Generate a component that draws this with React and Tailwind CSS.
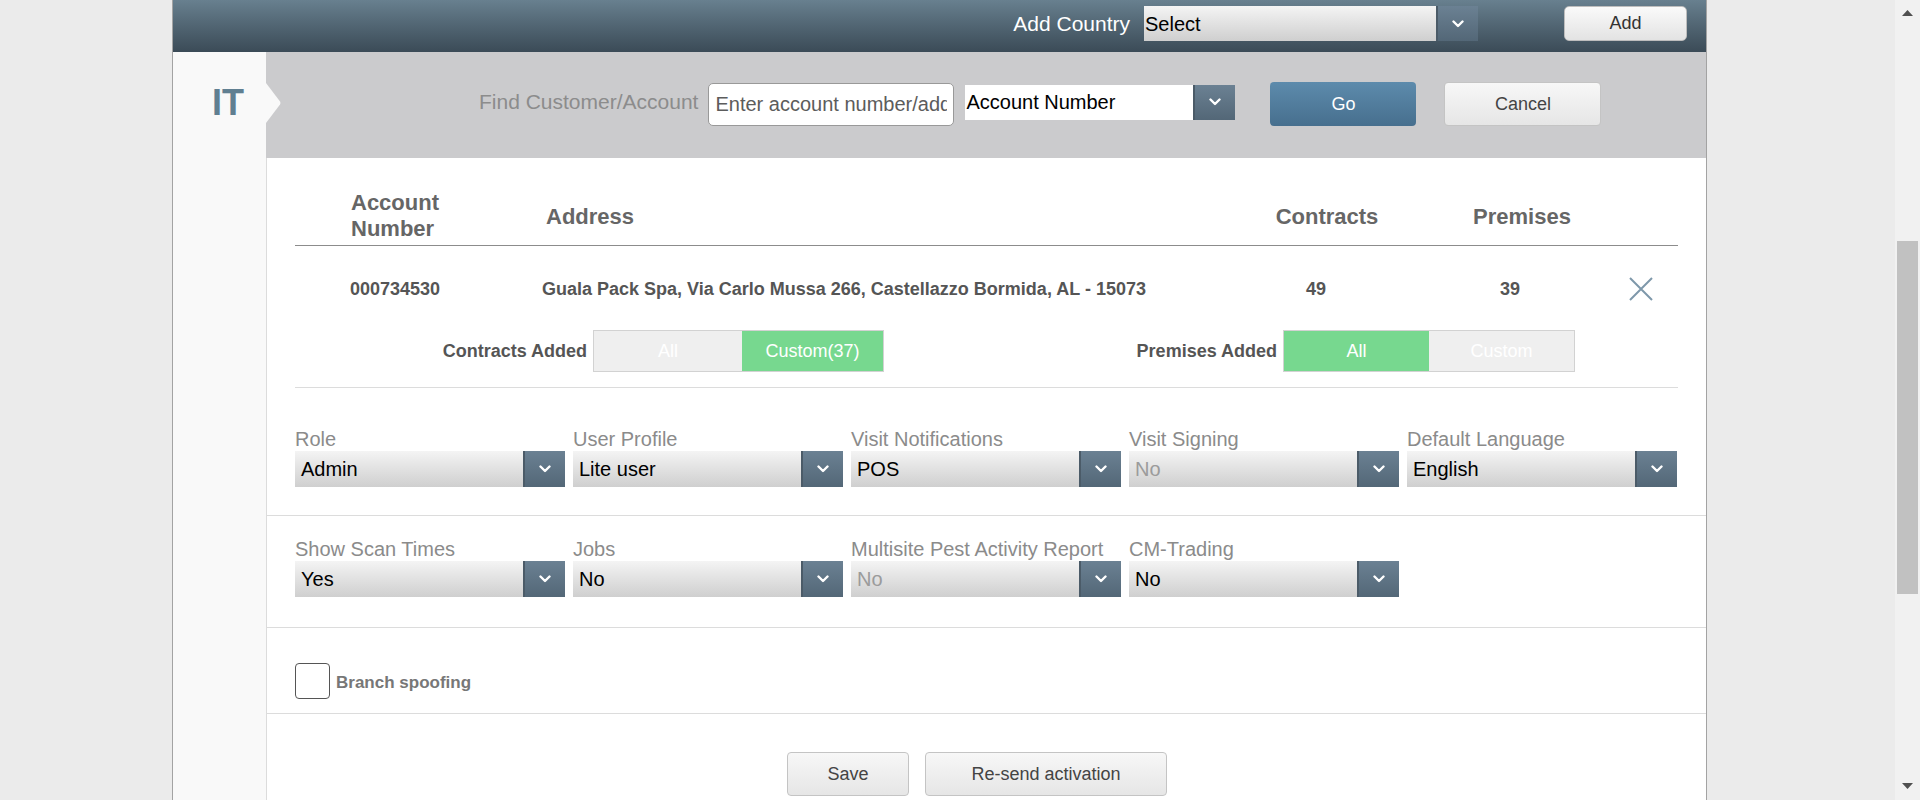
import { useState } from "react"

const Chevron = () => (
  <svg width="12" height="8" viewBox="0 0 12 8" fill="none">
    <path d="M1.5 1.5L6 6l4.5-4.5" stroke="white" strokeWidth="2.4" strokeLinecap="round" strokeLinejoin="round" />
  </svg>
)

const Dropdown = ({ value, disabled, white, className, pad = "pl-[6px]" }) => (
  <div
    className={`flex ${className} ${
      white ? "bg-white" : "bg-linear-to-b from-[#f4f4f4] to-[#cfcfcf]"
    }`}
  >
    <span
      className={`flex-1 flex items-center ${pad} text-[20px] truncate ${
        disabled ? "text-[#9b9b9b]" : "text-black"
      }`}
    >
      {value}
    </span>
    <span className="w-[42px] flex items-center justify-center border-l-2 border-[#4b5b68] bg-linear-to-b from-[#6b8193] to-[#536777]">
      <Chevron />
    </span>
  </div>
)

const Field = ({ label, value, disabled }) => (
  <div className="w-[270px] flex flex-col">
    <span className="text-[20px] leading-[23px] text-[#8b8b8b] whitespace-nowrap">{label}</span>
    <Dropdown value={value} disabled={disabled} className="h-[36px]" />
  </div>
)

const Segment = ({ left, right, active, leftW, rightW }) => (
  <div className="flex h-[42px] border border-[#d2d2d2] font-normal">
    <span
      className={`${leftW} flex items-center justify-center text-[18px] text-white ${
        active === "left" ? "bg-[#77d88f]" : "bg-[#efefef]"
      }`}
    >
      {left}
    </span>
    <span
      className={`${rightW} flex items-center justify-center text-[18px] text-white ${
        active === "right" ? "bg-[#77d88f]" : "bg-[#efefef]"
      }`}
    >
      {right}
    </span>
  </div>
)

const row1 = [
  { label: "Role", value: "Admin" },
  { label: "User Profile", value: "Lite user" },
  { label: "Visit Notifications", value: "POS" },
  { label: "Visit Signing", value: "No", disabled: true },
  { label: "Default Language", value: "English" },
]

const row2 = [
  { label: "Show Scan Times", value: "Yes" },
  { label: "Jobs", value: "No" },
  { label: "Multisite Pest Activity Report", value: "No", disabled: true },
  { label: "CM-Trading", value: "No" },
]

export default function App() {
  const [search, setSearch] = useState("")
  const [spoofing, setSpoofing] = useState(false)

  return (
    <div className="flex h-[800px] overflow-hidden bg-[#ebebeb] font-['Liberation_Sans',Arial,sans-serif]">
      <div className="flex-1 pl-[172px]">
        <div className="w-[1535px] h-full flex flex-col bg-white border-x border-[#a3a3a3]">
          {/* Header bar */}
          <div className="h-[52px] shrink-0 flex items-center justify-end pr-[19px] pb-[5px] bg-linear-to-b from-[#68808f] to-[#3b4b57]">
            <span className="text-[21px] text-white mr-[14px]">Add Country</span>
            <Dropdown value="Select" pad="pl-[1px]" className="w-[334px] h-[35px] mr-[86px]" />
            <button className="w-[123px] h-[35px] rounded-[5px] border border-[#bdbdbd] bg-linear-to-b from-[#fafafa] to-[#e3e3e3] text-[18px] text-[#333]">
              Add
            </button>
          </div>

          <div className="flex flex-1">
            {/* Country column */}
            <div className="w-[93px] shrink-0 bg-[#f9f9f9] relative">
              <div className="h-[106px] flex items-center justify-center pl-[17px] pb-[4px] text-[36px] font-bold text-[#607f91]">
                IT
              </div>
              <svg className="absolute left-full top-[31px] z-10" width="16" height="40" viewBox="0 0 16 40">
                <path d="M0 0L14 18.5Q15 20 14 21.5L0 40Z" fill="#f9f9f9" />
              </svg>
            </div>

            <div className="flex-1 flex flex-col">
              {/* Search band */}
              <div className="h-[106px] shrink-0 flex items-center pl-[213px] pb-[2px] bg-[#cbcbcd]">
                <span className="text-[21px] text-[#8c8c8c] pb-[5px]">Find Customer/Account</span>
                <input
                  value={search}
                  onChange={(e) => setSearch(e.target.value)}
                  placeholder="Enter account number/address"
                  className="ml-[10px] w-[246px] h-[43px] rounded-[5px] border border-[#999] bg-white px-[6px] text-[20px] text-[#333] placeholder:text-[#5c5c5c] outline-none"
                />
                <Dropdown value="Account Number" white pad="pl-[1px]" className="ml-[11px] w-[270px] h-[35px] mb-[4px]" />
                <button className="ml-[35px] w-[146px] h-[44px] rounded-[4px] bg-linear-to-b from-[#5d8bac] to-[#476f8e] text-[18px] text-white">
                  Go
                </button>
                <button className="ml-[28px] w-[157px] h-[44px] rounded-[4px] border border-[#c4c4c4] bg-linear-to-b from-[#f7f7f7] to-[#e6e6e6] text-[18px] text-[#444]">
                  Cancel
                </button>
              </div>

              {/* Content */}
              <div className="flex-1 flex flex-col border-l border-[#dcdcdc]">
                <div className="px-[28px]">
                  <div className="border-b border-[#dcdcdc] pb-[15px]">
                    <div className="h-[88px] pt-[29px] flex items-center border-b border-[#8c8c8c] text-[22px] font-bold text-[#666]">
                      <div className="w-[246px] pl-[56px] leading-[26px]">
                        Account
                        <br />
                        Number
                      </div>
                      <div className="w-[689px] pl-[5px]">Address</div>
                      <div className="w-[190px] text-center pl-[4px]">Contracts</div>
                      <div className="w-[190px] text-center pl-[14px]">Premises</div>
                      <div className="w-[68px]" />
                    </div>

                    <div className="h-[86px] flex items-center text-[18px] font-bold text-[#555]">
                      <div className="w-[246px] pl-[55px]">000734530</div>
                      <div className="w-[689px] pl-[1px]">
                        Guala Pack Spa, Via Carlo Mussa 266, Castellazzo Bormida, AL - 15073
                      </div>
                      <div className="w-[190px] text-center pr-[18px]">49</div>
                      <div className="w-[190px] text-center pr-[10px]">39</div>
                      <div className="w-[68px] flex justify-center pr-[6px]">
                        <svg width="26" height="26" viewBox="0 0 26 26">
                          <path d="M2 2L24 24M24 2L2 24" stroke="#7e98aa" strokeWidth="2" />
                        </svg>
                      </div>
                    </div>

                    <div className="-mt-[2px] flex items-center text-[18px] font-bold text-[#555]">
                      <span className="w-[292px] text-right">Contracts Added</span>
                      <div className="ml-[6px]">
                        <Segment left="All" right="Custom(37)" active="right" leftW="w-[148px]" rightW="w-[141px]" />
                      </div>
                      <span className="w-[393px] text-right">Premises Added</span>
                      <div className="ml-[6px]">
                        <Segment left="All" right="Custom" active="left" leftW="w-[145px]" rightW="w-[145px]" />
                      </div>
                    </div>
                  </div>
                </div>

                <div className="h-[128px] pt-[40px] px-[28px] flex gap-[8px] border-b border-[#dcdcdc]">
                  {row1.map((f) => (
                    <Field key={f.label} {...f} />
                  ))}
                </div>

                <div className="h-[112px] pt-[22px] px-[28px] flex gap-[8px] border-b border-[#dcdcdc]">
                  {row2.map((f) => (
                    <Field key={f.label} {...f} />
                  ))}
                </div>

                <div className="h-[86px] pt-[35px] px-[28px] flex items-start border-b border-[#dcdcdc]">
                  <button
                    onClick={() => setSpoofing(!spoofing)}
                    className="w-[35px] h-[36px] rounded-[4px] border border-[#555] bg-white flex items-center justify-center text-[#555]"
                  >
                    {spoofing ? "✓" : ""}
                  </button>
                  <span className="ml-[6px] mt-[7px] text-[17px] font-bold text-[#777]">Branch spoofing</span>
                </div>

                <div className="pt-[38px] pl-[520px] flex gap-[16px]">
                  <button className="w-[122px] h-[44px] rounded-[4px] border border-[#c4c4c4] bg-linear-to-b from-[#f7f7f7] to-[#e6e6e6] text-[18px] text-[#444]">
                    Save
                  </button>
                  <button className="w-[242px] h-[44px] rounded-[4px] border border-[#c4c4c4] bg-linear-to-b from-[#f7f7f7] to-[#e6e6e6] text-[18px] text-[#444]">
                    Re-send activation
                  </button>
                </div>
              </div>
            </div>
          </div>
        </div>
      </div>

      {/* Scrollbar */}
      <div className="w-[25px] shrink-0 bg-[#f1f1f1] flex flex-col items-center">
        <svg className="mt-[10px]" width="11" height="6" viewBox="0 0 11 6">
          <path d="M0 6L5.5 0L11 6Z" fill="#505050" />
        </svg>
        <div className="mt-[225px] w-[21px] h-[353px] bg-[#c1c1c1]" />
        <div className="flex-1" />
        <svg className="mb-[11px]" width="11" height="6" viewBox="0 0 11 6">
          <path d="M0 0L11 0L5.5 6Z" fill="#505050" />
        </svg>
      </div>
    </div>
  )
}
